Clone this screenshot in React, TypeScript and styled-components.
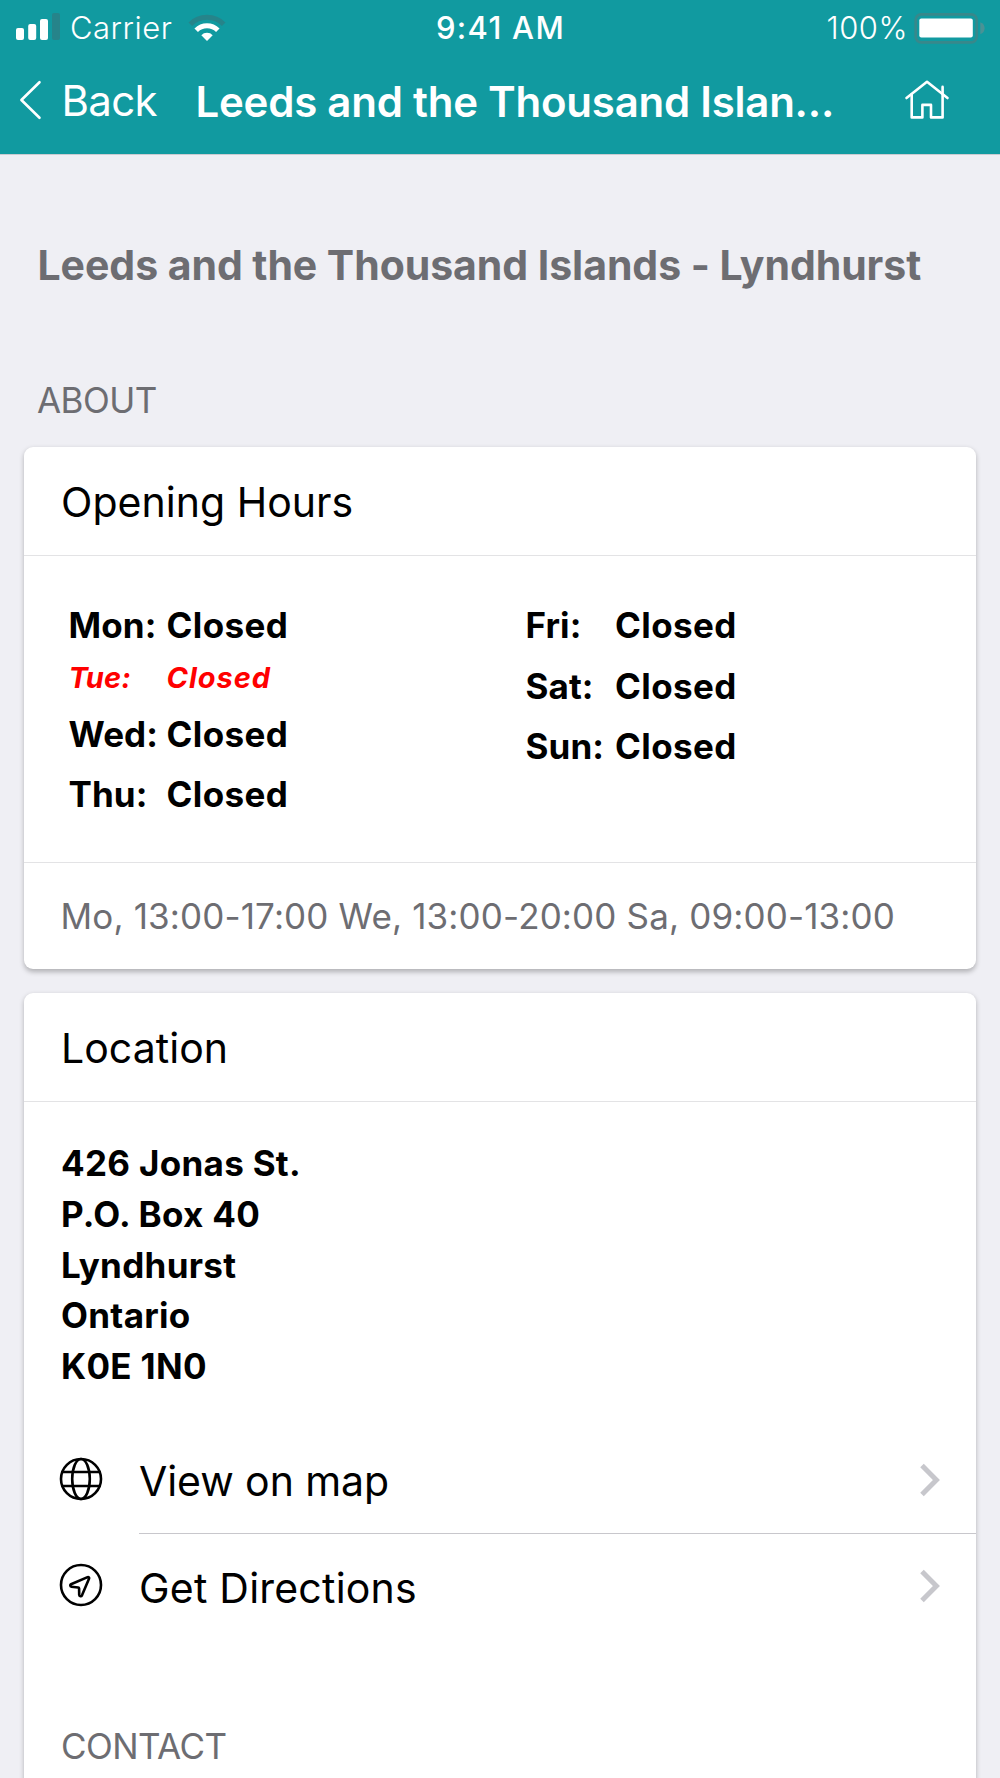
import React from 'react';
import styled, { createGlobalStyle } from 'styled-components';

const GlobalStyle = createGlobalStyle`
  * { box-sizing: border-box; }
  body {
    margin: 0;
    background: #efeff4;
    font-family: Inter, "Liberation Sans", sans-serif;
    color: #000;
  }
`;

const Screen = styled.div`
  width: 1000px;
  height: 1778px;
  overflow: hidden;
  display: flex;
  flex-direction: column;
  background: #efeff4;
`;

const Header = styled.header`
  flex: none;
  height: 154px;
  background: #119aa0;
  color: #fff;
  box-shadow: 0 1px 0 #cacbd1;
`;

const StatusBar = styled.div`
  height: 56px;
  padding: 0 15px 0 16px;
  display: grid;
  grid-template-columns: 1fr auto 1fr;
  align-items: center;
`;

const StatusGroup = styled.div<{ $end?: boolean }>`
  display: flex;
  align-items: center;
  justify-content: ${(p) => (p.$end ? 'flex-end' : 'flex-start')};
`;

const StatusText = styled.span<{ $weight?: number; $spacing?: number }>`
  font-size: 31px;
  line-height: 56px;
  font-weight: ${(p) => p.$weight ?? 300};
  letter-spacing: ${(p) => p.$spacing ?? 0.5}px;
  white-space: nowrap;
`;

const SignalIcon = styled.svg`
  display: block;
  margin: -2px 10px 0 0;
`;

const WifiIcon = styled.svg`
  display: block;
  margin: -1px 0 0 15px;
`;

const BatteryIcon = styled.svg`
  display: block;
  margin: -1px 0 0 5px;
`;

const NavBar = styled.nav`
  height: 98px;
  padding: 0 50px 11px 19px;
  display: flex;
  align-items: center;
`;

const BackButton = styled.div`
  display: flex;
  align-items: center;
  width: 176.5px;
`;

const BackLabel = styled.span`
  margin: 2px 0 0 18.5px;
  font-size: 42px;
  line-height: 50px;
  letter-spacing: -0.7px;
`;

const NavTitle = styled.h1`
  flex: 1;
  margin: 5px 0 0;
  font-size: 42px;
  line-height: 50px;
  font-weight: 600;
  letter-spacing: -0.24px;
  white-space: nowrap;
`;

const Content = styled.main`
  flex: none;
  padding: 0 24px;
`;

const PageTitle = styled.h2`
  margin: 0;
  padding-left: 13.5px;
  font-size: 41px;
  line-height: 223px;
  font-weight: 700;
  letter-spacing: -0.06px;
  color: #6d6d72;
  white-space: nowrap;
`;

const SectionLabel = styled.div<{ $inCard?: boolean }>`
  padding-left: ${(p) => (p.$inCard ? 37 : 13)}px;
  margin: ${(p) => (p.$inCard ? '83px 0 24px' : '0 0 24px')};
  font-size: 35px;
  line-height: 46px;
  letter-spacing: -0.55px;
  color: #6d6d72;
`;

const Card = styled.section<{ $height: number }>`
  height: ${(p) => p.$height}px;
  display: flex;
  flex-direction: column;
  margin-bottom: 24.5px;
  border-radius: 9px;
  background: #fff;
  box-shadow: 0 2.6px 5.3px rgba(0, 0, 0, 0.26);
`;

const CardHeader = styled.h3`
  flex: none;
  margin: 0;
  height: 109px;
  padding: 1px 37px 0;
  border-bottom: 1px solid #e3e3e5;
  font-size: 41px;
  line-height: 108px;
  font-weight: 400;
  letter-spacing: 0.03px;
`;

const Hours = styled.div`
  height: 306px;
  padding: 39px 44px 0 44.5px;
  display: grid;
  grid-template-columns: 457px 1fr;
`;

const HoursColumn = styled.div``;

const HoursRow = styled.div<{ $labelWidth: number; $today?: boolean }>`
  display: grid;
  grid-template-columns: ${(p) => p.$labelWidth}px auto;
  height: ${(p) => (p.$today ? 48 : 60.5)}px;
  padding-bottom: ${(p) => (p.$today ? 3 : 0)}px;
  align-items: center;
  font-size: ${(p) => (p.$today ? 29 : 35)}px;
  font-style: ${(p) => (p.$today ? 'italic' : 'normal')};
  font-weight: ${(p) => (p.$today ? 700 : 660)};
  line-height: 44px;
  color: ${(p) => (p.$today ? '#f00' : '#000')};
  white-space: nowrap;
`;

const DayName = styled.span`
  letter-spacing: 0.1px;
`;

const DayValue = styled.span<{ $today?: boolean }>`
  letter-spacing: ${(p) => (p.$today ? 0.95 : 0.4)}px;
`;

const HoursNote = styled.div`
  flex: 1;
  display: flex;
  align-items: center;
  padding: 1px 36px 0 36.5px;
  border-top: 1px solid #e3e3e5;
  font-size: 35px;
  line-height: 50px;
  letter-spacing: 0.15px;
  color: #6d6d72;
  white-space: nowrap;
`;

const Address = styled.address`
  padding: 36px 37px 35.5px;
  font-size: 35px;
  font-style: normal;
  font-weight: 670;
  line-height: 50.75px;
  letter-spacing: 0.3px;
`;

const ActionRow = styled.div`
  display: flex;
  align-items: center;
  height: 106.3px;
  padding-left: 35.5px;
`;

const ActionBody = styled.div<{ $divided?: boolean }>`
  flex: 1;
  align-self: stretch;
  display: flex;
  align-items: center;
  justify-content: space-between;
  margin-left: 35px;
  padding-right: 36px;
  border-bottom: 1px solid ${(p) => (p.$divided ? '#c8c7cc' : 'transparent')};
`;

const ActionLabel = styled.span<{ $spacing: number }>`
  padding: 3px 0 0 0.5px;
  font-size: 41px;
  line-height: 52px;
  letter-spacing: ${(p) => p.$spacing}px;
`;

const RowIcon = styled.svg`
  display: block;
  flex: none;
  margin: 0 0.5px 3px -0.5px;
`;

const stroke = {
  fill: 'none',
  stroke: 'currentColor',
  strokeLinecap: 'round' as const,
  strokeLinejoin: 'round' as const,
};

const Globe = () => (
  <RowIcon width="44" height="44" viewBox="0 0 44 44" {...stroke} strokeWidth="2.6">
    <circle cx="22" cy="22" r="20" />
    <ellipse cx="22" cy="22" rx="8.8" ry="20" />
    <path d="M3.5 15H40.5M3.5 29H40.5" />
  </RowIcon>
);

const Navigate = () => (
  <RowIcon width="44" height="44" viewBox="0 0 44 44" {...stroke} strokeWidth="2.6">
    <circle cx="22" cy="22" r="20" />
    <path d="M28.6 14.1L12 21.3C10.9 21.8 11.1 23.6 12.3 23.7L19.2 24.5Q20 24.6 20.1 25.4L20.2 31.8C20.4 33.4 22.3 33.7 23 32.3L30.1 15.6C30.5 14.6 29.6 13.7 28.6 14.1Z" />
  </RowIcon>
);

const Chevron = () => (
  <svg width="20" height="34" viewBox="0 0 20 34" fill="none" stroke="#c7c7cc" strokeWidth="5">
    <path d="M2 2.5L16.4 17L2 31.5" />
  </svg>
);

type Day = { name: string; value: string; today?: boolean };

const weekStart: Day[] = [
  { name: 'Mon:', value: 'Closed' },
  { name: 'Tue:', value: 'Closed', today: true },
  { name: 'Wed:', value: 'Closed' },
  { name: 'Thu:', value: 'Closed' },
];

const weekEnd: Day[] = [
  { name: 'Fri:', value: 'Closed' },
  { name: 'Sat:', value: 'Closed' },
  { name: 'Sun:', value: 'Closed' },
];

const addressLines = ['426 Jonas St.', 'P.O. Box 40', 'Lyndhurst', 'Ontario', 'K0E 1N0'];

const DayList = ({ days, labelWidth }: { days: Day[]; labelWidth: number }) => (
  <HoursColumn>
    {days.map((d) => (
      <HoursRow key={d.name} $labelWidth={labelWidth} $today={d.today}>
        <DayName>{d.name}</DayName>
        <DayValue $today={d.today}>{d.value}</DayValue>
      </HoursRow>
    ))}
  </HoursColumn>
);

export default function App() {
  return (
    <Screen>
      <GlobalStyle />
      <Header>
        <StatusBar>
          <StatusGroup>
            <SignalIcon width="44" height="28" viewBox="0 0 44 28" fill="#fff">
              <rect x="0" y="15" width="8" height="12" rx="2" />
              <rect x="12.2" y="11" width="8" height="16" rx="2" />
              <rect x="24" y="6" width="8" height="21" rx="2" />
              <rect x="36" y="0" width="8" height="27" rx="2" fill="#26848a" />
            </SignalIcon>
            <StatusText>Carrier</StatusText>
            <WifiIcon width="40" height="28" viewBox="0 0 40 28" fill="none" strokeWidth="5">
              <path d="M3.3 10.2A23.6 23.6 0 0 1 36.7 10.2" stroke="#26848a" />
              <path d="M9.2 16.2A15.3 15.3 0 0 1 30.8 16.2" stroke="#fff" />
              <path d="M14.3 21.2A8 8 0 0 1 25.7 21.2L20 27Z" fill="#fff" />
            </WifiIcon>
          </StatusGroup>
          <StatusText $weight={460} $spacing={1.3}>9:41 AM</StatusText>
          <StatusGroup $end>
            <StatusText>100%</StatusText>
            <BatteryIcon width="72" height="32" viewBox="0 0 72 32">
              <rect x="2.7" y="2.3" width="61" height="28" rx="5.5" fill="none" stroke="#38888b" strokeWidth="2.7" />
              <rect x="6.3" y="6.5" width="53.5" height="19" rx="2" fill="#fff" />
              <path d="M67.3 10.3C73 12 73 20.5 67.3 22.3Z" fill="#4a9295" />
            </BatteryIcon>
          </StatusGroup>
        </StatusBar>
        <NavBar>
          <BackButton>
            <svg width="24" height="40" viewBox="0 0 24 40" {...stroke} strokeWidth="2.6">
              <path d="M20.5 2.2L2.4 20L20.5 37.8" />
            </svg>
            <BackLabel>Back</BackLabel>
          </BackButton>
          <NavTitle>Leeds and the Thousand Islan...</NavTitle>
          <svg width="46" height="40" viewBox="0 0 46 40" {...stroke} strokeWidth="2.6">
            <path d="M2.5 18L23 1.8L43.5 18" />
            <path d="M7.7 14.4V37.4H18.4V24.9H27V37.4H38.6V6.9" />
          </svg>
        </NavBar>
      </Header>
      <Content>
        <PageTitle>Leeds and the Thousand Islands - Lyndhurst</PageTitle>
        <SectionLabel>ABOUT</SectionLabel>
        <Card $height={521.5}>
          <CardHeader>Opening Hours</CardHeader>
          <Hours>
            <DayList days={weekStart} labelWidth={98} />
            <DayList days={weekEnd} labelWidth={89.5} />
          </Hours>
          <HoursNote>Mo, 13:00-17:00 We, 13:00-20:00 Sa, 09:00-13:00</HoursNote>
        </Card>
        <Card $height={900}>
          <CardHeader>Location</CardHeader>
          <Address>
            {addressLines.map((line) => (
              <div key={line}>{line}</div>
            ))}
          </Address>
          <ActionRow>
            <Globe />
            <ActionBody $divided>
              <ActionLabel $spacing={-0.07}>View on map</ActionLabel>
              <Chevron />
            </ActionBody>
          </ActionRow>
          <ActionRow>
            <Navigate />
            <ActionBody>
              <ActionLabel $spacing={0.22}>Get Directions</ActionLabel>
              <Chevron />
            </ActionBody>
          </ActionRow>
          <SectionLabel $inCard>CONTACT</SectionLabel>
        </Card>
      </Content>
    </Screen>
  );
}
